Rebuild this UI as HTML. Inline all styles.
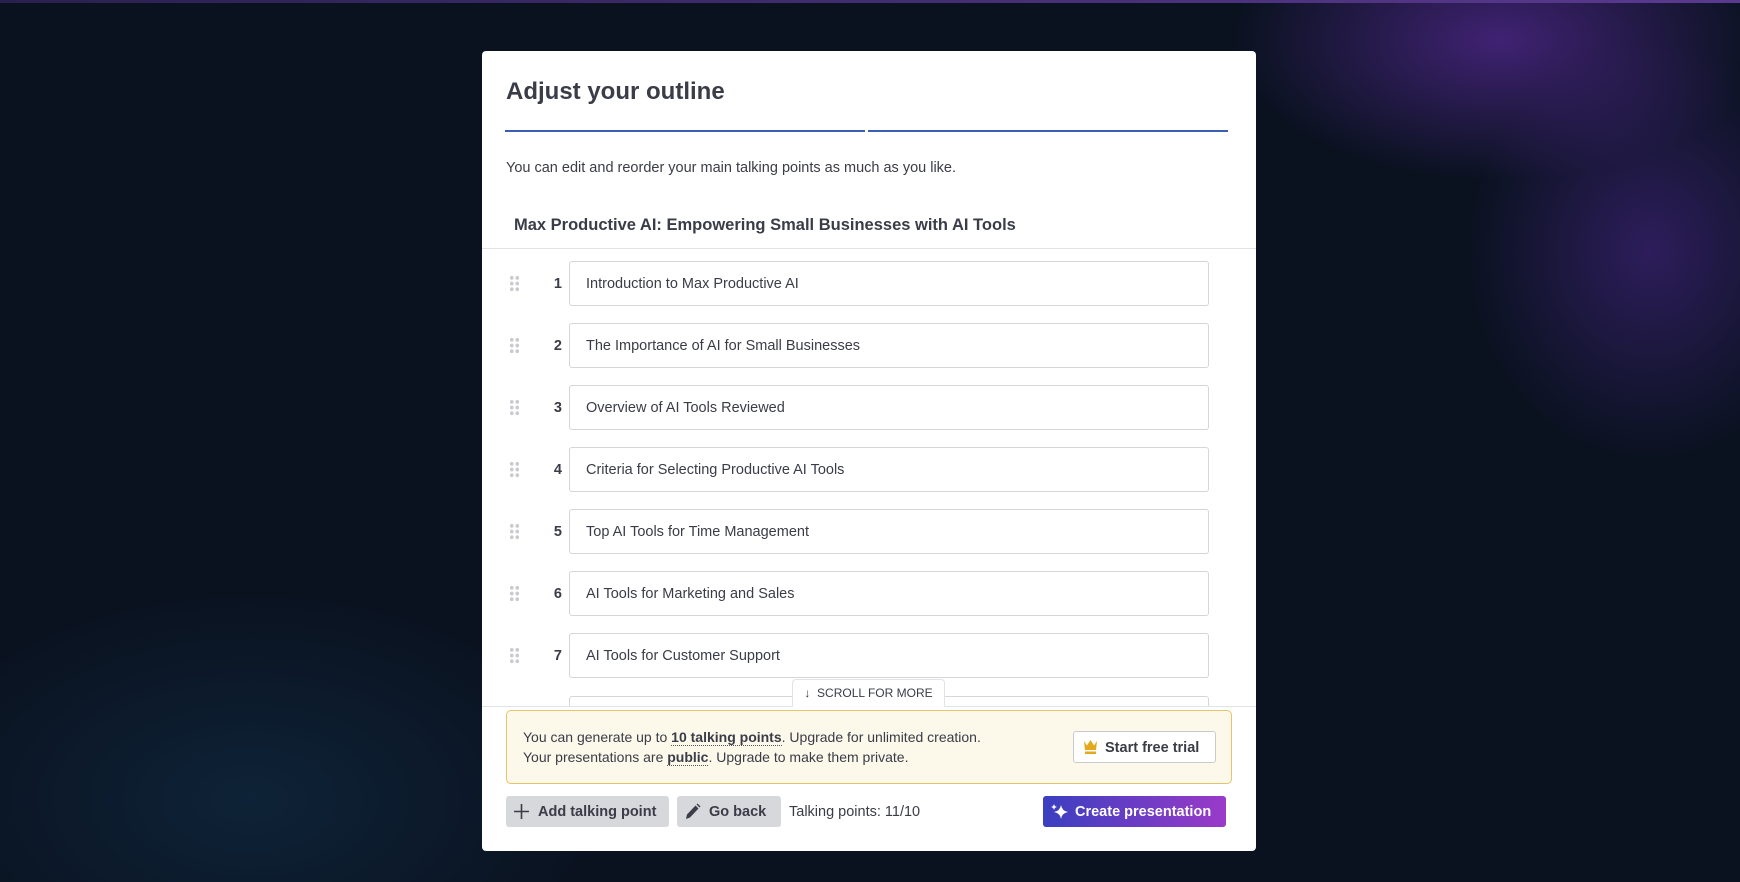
<!DOCTYPE html>
<html><head><meta charset="utf-8"><style>
*{box-sizing:border-box;margin:0;padding:0}
body{width:1740px;height:882px;overflow:hidden;font-family:"Liberation Sans",sans-serif;color:#2d2f3a;
background:
radial-gradient(ellipse 380px 200px at 1500px 40px,rgba(100,45,170,.6),transparent 70%),
radial-gradient(ellipse 260px 300px at 1650px 250px,rgba(80,40,150,.5),transparent 70%),
radial-gradient(ellipse 500px 300px at 250px 800px,rgba(20,60,90,.4),transparent 70%),
#0a1220;position:relative}
.top{position:absolute;left:0;top:0;width:1740px;height:3px;background:linear-gradient(90deg,#2a2050,#5a3a90)}
.m{position:absolute;left:482px;top:51px;width:774px;height:800px;background:#fff;border-radius:4px;overflow:hidden}
.t{position:absolute;left:24px;top:27px;font-size:24px;font-weight:bold;color:#3a3c48}
.pl{position:absolute;top:79px;height:1.5px;background:#3a5fb0}
.sub{position:absolute;left:24px;top:109px;font-size:14.5px;color:#3a3c48}
.h{position:absolute;left:32px;top:165px;font-size:16.5px;font-weight:bold;color:#3a3c48}
.div{position:absolute;left:0;top:197px;width:774px;height:1px;background:#e2e3e6}
.list{position:absolute;left:0;top:198px;width:774px;height:457px;overflow:hidden}
.it{position:absolute;left:87px;width:640px;height:45px;border:1px solid #d4d6da;border-radius:3px;font-size:14.5px;padding:0 16px;line-height:45px;color:#3a3c48}
.n{position:absolute;left:60px;width:20px;height:45px;line-height:46px;text-align:right;font-size:14.5px;font-weight:bold;color:#3a3c48}
.d{position:absolute;left:27px;width:11px;height:17px;background-image:radial-gradient(circle,#c8cacf 1.8px,transparent 2px);background-size:5.5px 5.7px}
.sc{position:absolute;left:310px;top:628px;width:153px;height:28px;background:#fff;border:1px solid #e2e3e6;border-bottom:none;border-radius:4px 4px 0 0;font-size:12px;color:#3a3c48;text-align:center;line-height:26px;z-index:3}
.div2{position:absolute;left:0;top:655px;width:774px;height:1px;background:#e2e3e6}
.ban{position:absolute;left:24px;top:659px;width:726px;height:74px;background:#fcf8ea;border:1px solid #e6c46a;border-radius:5px;font-size:14px;color:#3a3c48}
.ban p{position:absolute;left:16px}
.ban b{border-bottom:1px dotted #555}
.sft{position:absolute;left:566px;top:20px;width:143px;height:32px;border:1px solid #c9cbcf;border-radius:3px;background:#fff;font-size:14.5px;font-weight:bold;line-height:32px;padding-left:31px}
.btn{position:absolute;top:745px;height:31px;border-radius:3px;background:#d6d8dc;font-size:14.5px;font-weight:bold;line-height:32px;color:#3a3c48}
.cp{position:absolute;left:561px;top:745px;width:183px;height:31px;border-radius:3px;background:linear-gradient(90deg,#3a3fc0,#9b3ac8);color:#fff;font-size:14.5px;font-weight:bold;line-height:32px;padding-left:32px}
</style></head><body>
<div class="top"></div>
<div class="m">
<div class="t">Adjust your outline</div>
<div class="pl" style="left:23px;width:360px"></div>
<div class="pl" style="left:386px;width:360px"></div>
<div class="sub">You can edit and reorder your main talking points as much as you like.</div>
<div class="h">Max Productive AI: Empowering Small Businesses with AI Tools</div>
<div class="div"></div>
<div class="list">
<div class="d" style="top:26px"></div><div class="n" style="top:12px">1</div><div class="it" style="top:12px">Introduction to Max Productive AI</div>
<div class="d" style="top:88px"></div><div class="n" style="top:74px">2</div><div class="it" style="top:74px">The Importance of AI for Small Businesses</div>
<div class="d" style="top:150px"></div><div class="n" style="top:136px">3</div><div class="it" style="top:136px">Overview of AI Tools Reviewed</div>
<div class="d" style="top:212px"></div><div class="n" style="top:198px">4</div><div class="it" style="top:198px">Criteria for Selecting Productive AI Tools</div>
<div class="d" style="top:274px"></div><div class="n" style="top:260px">5</div><div class="it" style="top:260px">Top AI Tools for Time Management</div>
<div class="d" style="top:336px"></div><div class="n" style="top:322px">6</div><div class="it" style="top:322px">AI Tools for Marketing and Sales</div>
<div class="d" style="top:398px"></div><div class="n" style="top:384px">7</div><div class="it" style="top:384px">AI Tools for Customer Support</div>
<div class="it" style="top:447px"></div>
</div>
<div class="sc">↓&nbsp; SCROLL FOR MORE</div>
<div class="div2"></div>
<div class="ban">
<p style="top:18px">You can generate up to <b>10 talking points</b>. Upgrade for unlimited creation.</p>
<p style="top:38px">Your presentations are <b>public</b>. Upgrade to make them private.</p>
<div class="sft"><svg style="position:absolute;left:9px;top:7px" width="15" height="16" viewBox="0 0 15 16"><path d="M1 2l3 4.5 3.5-5.5 3.5 5.5 3-4.5-1 9H2z" fill="#e2a91c"/><rect x="2" y="12.5" width="11" height="2.5" fill="#e2a91c"/></svg>Start free trial</div>
</div>
<div class="btn" style="left:24px;width:163px;padding-left:32px"><svg style="position:absolute;left:8px;top:8px" width="15" height="15" viewBox="0 0 15 15"><path d="M7.5 0v15M0 7.5h15" stroke="#3a3c48" stroke-width="1.6"/></svg>Add talking point</div>
<div class="btn" style="left:195px;width:104px;padding-left:32px"><svg style="position:absolute;left:8px;top:7px" width="16" height="17" viewBox="0 0 16 17"><path d="M1 16l1-4.5 8.5-9 3 3-8.5 9z" fill="#3a3c48"/><path d="M11.5 1.5l1-1 3 3-1 1z" fill="#3a3c48"/></svg>Go back</div>
<div style="position:absolute;left:307px;top:745px;line-height:32px;font-size:14.5px;color:#3a3c48">Talking points: 11/10</div>
<div class="cp"><svg style="position:absolute;left:8px;top:7px" width="18" height="18" viewBox="0 0 18 18"><path d="M10 2q1 6 7 7q-6 1-7 7q-1-6-7-7q6-1 7-7z" fill="#fff"/><path d="M3 1q.5 2.5 3 3q-2.5.5-3 3q-.5-2.5-3-3q2.5-.5 3-3z" fill="#fff"/></svg>Create presentation</div>
</div>
</body></html>
